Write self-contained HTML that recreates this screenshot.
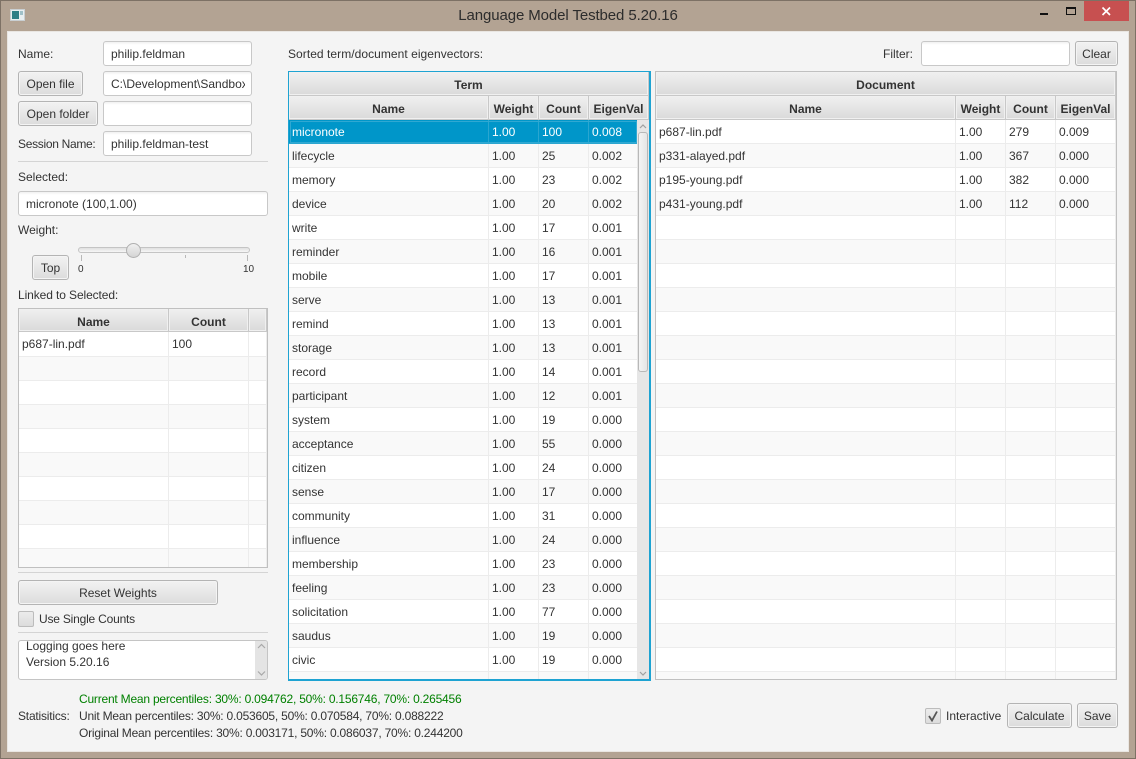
<!DOCTYPE html>
<html><head><meta charset="utf-8"><style>
html,body{margin:0;padding:0;width:1136px;height:759px;overflow:hidden;background:#b3a393}
body{position:relative;font:12px/16px "Liberation Sans",sans-serif;color:#333}
div{box-sizing:border-box}
.a{position:absolute;white-space:nowrap}
.l{position:absolute;white-space:nowrap;line-height:16px}
.in{position:absolute;background:linear-gradient(#f0f0f0 0,#fff 3px);border:1px solid #c8c8c8;border-radius:3px;height:25px;line-height:25px;padding-left:7px;overflow:hidden;white-space:nowrap}
.b{position:absolute;background:linear-gradient(#f2f2f2,#dcdcdc);border:1px solid #b4b4b4;border-radius:3px;height:25px;line-height:25px;text-align:center;white-space:nowrap;box-shadow:inset 0 0 0 1px #f4f4f4}
.s{position:absolute;height:1px;background:#d4d4d4}
.t{position:absolute;border-collapse:separate;border-spacing:0;table-layout:fixed;font-size:12px;background:#fff}
.t td{height:24px;padding:0 0 0 3px;border-right:1px solid #ececec;border-bottom:1px solid #ececec;box-sizing:border-box;overflow:hidden;white-space:nowrap;line-height:22px}
.t tr:nth-child(even) td{background:#f9f9f9}
.t tr.sel td{background:#0096c9;color:#fff;border-color:#2aa6d0}
.lt td{line-height:24px}
.h{position:absolute;height:24px;background:linear-gradient(#f0f0f0,#dadada);border-right:1px solid #c8c8c8;border-bottom:1px solid #c8c8c8;box-shadow:inset 0 0 0 1px #f0f0f0;font-weight:bold;text-align:center;line-height:26px;white-space:nowrap;overflow:hidden}
.box{position:absolute;overflow:hidden;background:#fff}
</style></head><body>
<!-- window -->
<div class="a" style="left:0;top:0;width:1136px;height:1px;background:#7d7165"></div>
<div class="a" style="left:0;top:0;width:1px;height:759px;background:#7d7165"></div>
<div class="a" style="left:1135px;top:0;width:1px;height:759px;background:#7d7165"></div>
<div class="a" style="left:0;top:758px;width:1136px;height:1px;background:#7d7165"></div>
<div class="a" style="left:10px;top:9px;width:15px;height:12px;background:#e8eef0;border:1px solid #c9cfd2"><div class="a" style="left:1px;top:1px;width:7px;height:8px;background:#2f7f86"></div><div class="a" style="left:9px;top:1px;width:3px;height:4px;background:#9fc0c8"></div></div>
<div class="a" style="left:0;top:7px;width:1136px;text-align:center;font-size:15px;letter-spacing:-0.1px;line-height:18px;color:#2c2c2c">Language Model Testbed 5.20.16</div>
<div class="a" style="left:1040px;top:13px;width:8px;height:2px;background:#111"></div>
<div class="a" style="left:1066px;top:7px;width:10px;height:8px;border:1px solid #111;border-top-width:2px"></div>
<div class="a" style="left:1084px;top:1px;width:45px;height:20px;background:#c75050"></div>
<svg class="a" style="left:1101px;top:6px" width="11" height="11" viewBox="0 0 11 11"><path d="M1.5 1.5L9 9M9 1.5L1.5 9" stroke="#fff" stroke-width="1.700" fill="none"/></svg>
<div class="a" style="left:7px;top:31px;width:1122px;height:721px;background:#f4f4f4;border:1px solid #e9e6e2"></div>

<!-- left panel -->
<div class="l" style="left:18px;top:46px">Name:</div>
<div class="in" style="left:103px;top:41px;width:149px">philip.feldman</div>
<div class="b" style="left:18px;top:71px;width:65px">Open file</div>
<div class="in" style="left:103px;top:71px;width:149px"><div style="overflow:hidden;width:134px">C:\Development\Sandbox</div></div>
<div class="b" style="left:18px;top:101px;width:80px">Open folder</div>
<div class="in" style="left:103px;top:101px;width:149px"></div>
<div class="l" style="left:18px;top:136px;letter-spacing:-0.3px">Session Name:</div>
<div class="in" style="left:103px;top:131px;width:149px">philip.feldman-test</div>
<div class="s" style="left:18px;top:161px;width:250px"></div>
<div class="l" style="left:18px;top:169px">Selected:</div>
<div class="in" style="left:18px;top:191px;width:250px">micronote (100,1.00)</div>
<div class="l" style="left:18px;top:222px">Weight:</div>
<div class="a" style="left:78px;top:247px;width:172px;height:6px;background:linear-gradient(#e0e0e0,#f6f6f6);border:1px solid #c4c4c4;border-radius:3px"></div>
<div class="a" style="left:126px;top:243px;width:15px;height:15px;border-radius:50%;background:linear-gradient(#f0f0f0,#d4d4d4);border:1px solid #b0b0b0"></div>
<div class="a" style="left:81px;top:255px;width:1px;height:6px;background:#b8b8b8"></div>
<div class="a" style="left:185px;top:255px;width:1px;height:3px;background:#b8b8b8"></div>
<div class="a" style="left:247px;top:255px;width:1px;height:6px;background:#b8b8b8"></div>
<div class="l" style="left:78px;top:263px;font-size:10px;line-height:14px">0</div>
<div class="l" style="left:243px;top:263px;font-size:10px;line-height:14px">10</div>
<div class="b" style="left:32px;top:255px;width:37px">Top</div>
<div class="l" style="left:18px;top:287px;letter-spacing:-0.1px">Linked to Selected:</div>

<div class="box" style="left:18px;top:308px;width:250px;height:260px;border:1px solid #c0c0c0">
<div class="h" style="left:0;top:0;width:150px;height:23px;line-height:27px">Name</div>
<div class="h" style="left:150px;top:0;width:80px;height:23px;line-height:27px">Count</div>
<div class="h" style="left:230px;top:0;width:18px;height:23px"></div>
<table class="t lt" style="left:0;top:23px;width:248px"><colgroup><col style="width:150px"><col style="width:80px"><col style="width:18px"></colgroup>
<tr><td>p687-lin.pdf</td><td>100</td><td></td></tr>
<tr><td></td><td></td><td></td></tr><tr><td></td><td></td><td></td></tr><tr><td></td><td></td><td></td></tr><tr><td></td><td></td><td></td></tr><tr><td></td><td></td><td></td></tr><tr><td></td><td></td><td></td></tr><tr><td></td><td></td><td></td></tr><tr><td></td><td></td><td></td></tr><tr><td></td><td></td><td></td></tr>
</table></div>

<div class="s" style="left:18px;top:572px;width:250px"></div>
<div class="b" style="left:18px;top:580px;width:200px">Reset Weights</div>
<div class="a" style="left:18px;top:611px;width:16px;height:16px;background:linear-gradient(#ececec,#dcdcdc);border:1px solid #bcbcbc;border-radius:2px"></div>
<div class="l" style="left:39px;top:611px;letter-spacing:-0.2px">Use Single Counts</div>
<div class="s" style="left:18px;top:632px;width:250px"></div>

<div class="box" style="left:18px;top:640px;width:250px;height:40px;border:1px solid #c4c4c4;border-radius:3px">
<div class="l" style="left:7px;top:-3px">Logging goes here</div>
<div class="l" style="left:7px;top:13px">Version 5.20.16</div>
<div class="a" style="left:236px;top:0;width:12px;height:38px;background:#e4e4e4"></div>
<svg class="a" style="left:237px;top:0" width="11" height="38" viewBox="0 0 11 38"><path d="M2 7L5.500 3.500L9 7M2 30.500L5.500 34L9 30.500" stroke="#a8a8a8" stroke-width="1.200" fill="none"/></svg>
</div>

<!-- stats -->
<div class="l" style="left:18px;top:708px;letter-spacing:-0.2px">Statisitics:</div>
<div class="l" style="left:79px;top:691px;color:#008000;letter-spacing:-0.21px">Current Mean percentiles: 30%: 0.094762, 50%: 0.156746, 70%: 0.265456</div>
<div class="l" style="left:79px;top:708px;letter-spacing:-0.21px">Unit Mean percentiles: 30%: 0.053605, 50%: 0.070584, 70%: 0.088222</div>
<div class="l" style="left:79px;top:725px;letter-spacing:-0.21px">Original Mean percentiles: 30%: 0.003171, 50%: 0.086037, 70%: 0.244200</div>

<!-- top right -->
<div class="l" style="left:288px;top:46px;letter-spacing:0.05px">Sorted term/document eigenvectors:</div>
<div class="l" style="left:883px;top:46px">Filter:</div>
<div class="in" style="left:921px;top:41px;width:149px"></div>
<div class="b" style="left:1075px;top:41px;width:43px">Clear</div>

<!-- Term table -->
<div class="box" style="left:288px;top:71px;width:363px;height:610px;border:2px solid #1ea3d2;border-width:1px 2px 2px 1px">
<div class="h" style="left:0;top:0;width:360px;background:linear-gradient(#f0f0f0,#dadada)">Term</div>
<div class="h" style="left:0;top:24px;width:200px">Name</div>
<div class="h" style="left:200px;top:24px;width:50px">Weight</div>
<div class="h" style="left:250px;top:24px;width:50px">Count</div>
<div class="h" style="left:300px;top:24px;width:60px">EigenVal</div>
<table class="t" style="left:0;top:48px;width:360px"><colgroup><col style="width:200px"><col style="width:50px"><col style="width:50px"><col style="width:60px"></colgroup>
<tr class="sel"><td>micronote</td><td>1.00</td><td>100</td><td>0.008</td></tr>
<tr><td>lifecycle</td><td>1.00</td><td>25</td><td>0.002</td></tr>
<tr><td>memory</td><td>1.00</td><td>23</td><td>0.002</td></tr>
<tr><td>device</td><td>1.00</td><td>20</td><td>0.002</td></tr>
<tr><td>write</td><td>1.00</td><td>17</td><td>0.001</td></tr>
<tr><td>reminder</td><td>1.00</td><td>16</td><td>0.001</td></tr>
<tr><td>mobile</td><td>1.00</td><td>17</td><td>0.001</td></tr>
<tr><td>serve</td><td>1.00</td><td>13</td><td>0.001</td></tr>
<tr><td>remind</td><td>1.00</td><td>13</td><td>0.001</td></tr>
<tr><td>storage</td><td>1.00</td><td>13</td><td>0.001</td></tr>
<tr><td>record</td><td>1.00</td><td>14</td><td>0.001</td></tr>
<tr><td>participant</td><td>1.00</td><td>12</td><td>0.001</td></tr>
<tr><td>system</td><td>1.00</td><td>19</td><td>0.000</td></tr>
<tr><td>acceptance</td><td>1.00</td><td>55</td><td>0.000</td></tr>
<tr><td>citizen</td><td>1.00</td><td>24</td><td>0.000</td></tr>
<tr><td>sense</td><td>1.00</td><td>17</td><td>0.000</td></tr>
<tr><td>community</td><td>1.00</td><td>31</td><td>0.000</td></tr>
<tr><td>influence</td><td>1.00</td><td>24</td><td>0.000</td></tr>
<tr><td>membership</td><td>1.00</td><td>23</td><td>0.000</td></tr>
<tr><td>feeling</td><td>1.00</td><td>23</td><td>0.000</td></tr>
<tr><td>solicitation</td><td>1.00</td><td>77</td><td>0.000</td></tr>
<tr><td>saudus</td><td>1.00</td><td>19</td><td>0.000</td></tr>
<tr><td>civic</td><td>1.00</td><td>19</td><td>0.000</td></tr>
<tr><td></td><td></td><td></td><td></td></tr>
</table>
<div class="a" style="left:1px;top:49px;width:347px;height:22px;border:1px solid #30a8d2"></div>
<div class="a" style="left:348px;top:48px;width:12px;height:560px;background:#e6e6e6"></div>
<div class="a" style="left:349px;top:60px;width:10px;height:240px;background:linear-gradient(90deg,#f4f4f4,#e6e6e6);border:1px solid #b8b8b8;border-radius:3px"></div>
<svg class="a" style="left:348px;top:48px" width="12" height="560" viewBox="0 0 12 560"><path d="M3 8L6 5L9 8M3 552L6 555L9 552" stroke="#a0a0a0" stroke-width="1.200" fill="none"/></svg>
</div>

<!-- Document table -->
<div class="box" style="left:655px;top:71px;width:462px;height:609px;border:1px solid #c0c0c0">
<div class="h" style="left:0;top:0;width:460px">Document</div>
<div class="h" style="left:0;top:24px;width:300px">Name</div>
<div class="h" style="left:300px;top:24px;width:50px">Weight</div>
<div class="h" style="left:350px;top:24px;width:50px">Count</div>
<div class="h" style="left:400px;top:24px;width:60px">EigenVal</div>
<table class="t" style="left:0;top:48px;width:460px"><colgroup><col style="width:300px"><col style="width:50px"><col style="width:50px"><col style="width:60px"></colgroup>
<tr><td>p687-lin.pdf</td><td>1.00</td><td>279</td><td>0.009</td></tr>
<tr><td>p331-alayed.pdf</td><td>1.00</td><td>367</td><td>0.000</td></tr>
<tr><td>p195-young.pdf</td><td>1.00</td><td>382</td><td>0.000</td></tr>
<tr><td>p431-young.pdf</td><td>1.00</td><td>112</td><td>0.000</td></tr>
<tr><td></td><td></td><td></td><td></td></tr><tr><td></td><td></td><td></td><td></td></tr><tr><td></td><td></td><td></td><td></td></tr><tr><td></td><td></td><td></td><td></td></tr><tr><td></td><td></td><td></td><td></td></tr><tr><td></td><td></td><td></td><td></td></tr>
<tr><td></td><td></td><td></td><td></td></tr><tr><td></td><td></td><td></td><td></td></tr><tr><td></td><td></td><td></td><td></td></tr><tr><td></td><td></td><td></td><td></td></tr><tr><td></td><td></td><td></td><td></td></tr><tr><td></td><td></td><td></td><td></td></tr><tr><td></td><td></td><td></td><td></td></tr><tr><td></td><td></td><td></td><td></td></tr><tr><td></td><td></td><td></td><td></td></tr><tr><td></td><td></td><td></td><td></td></tr>
<tr><td></td><td></td><td></td><td></td></tr><tr><td></td><td></td><td></td><td></td></tr><tr><td></td><td></td><td></td><td></td></tr><tr><td></td><td></td><td></td><td></td></tr>
</table>
</div>

<!-- bottom right -->
<div class="a" style="left:925px;top:708px;width:16px;height:16px;background:linear-gradient(#ececec,#dcdcdc);border:1px solid #bcbcbc;border-radius:2px"></div>
<svg class="a" style="left:925px;top:708px" width="16" height="16" viewBox="0 0 16 16"><path d="M4 8L7 12.500L12 3.500" stroke="#555" stroke-width="1.800" fill="none"/></svg>
<div class="l" style="left:946px;top:708px">Interactive</div>
<div class="b" style="left:1007px;top:703px;width:65px">Calculate</div>
<div class="b" style="left:1077px;top:703px;width:41px">Save</div>
</body></html>
